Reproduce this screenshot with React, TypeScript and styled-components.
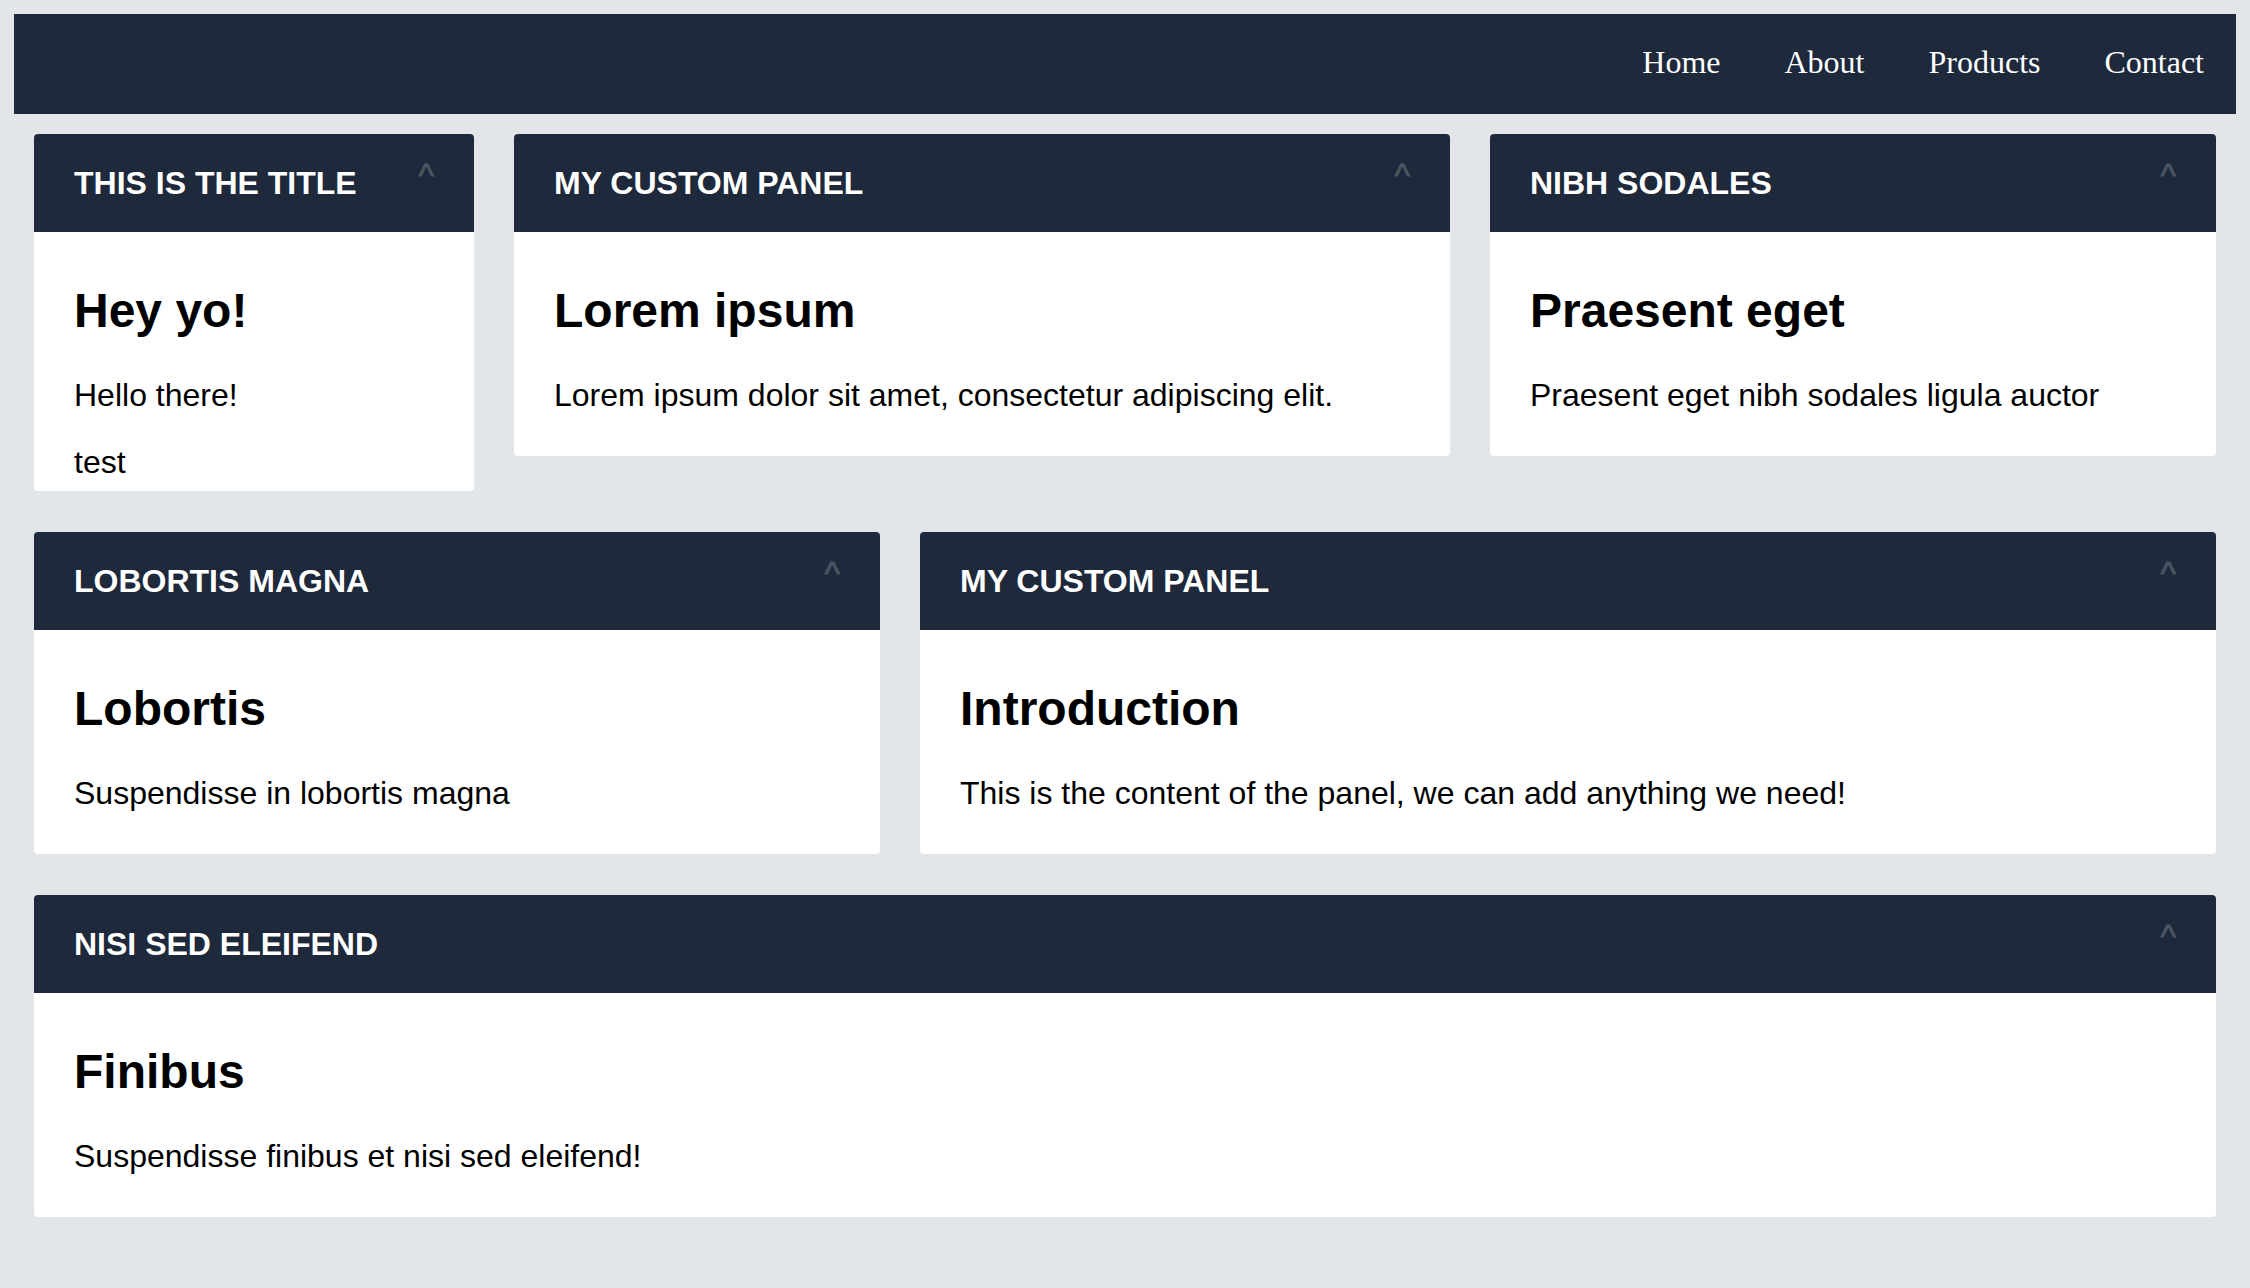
import React from "react";
import styled, { createGlobalStyle } from "styled-components";

const GlobalStyle = createGlobalStyle`
  html, body {
    margin: 0;
    padding: 0;
    background: #e2e6e9;
  }
  body {
    font-family: "Liberation Sans", Arial, sans-serif;
    color: #000;
  }
  * { box-sizing: border-box; }
`;

const Page = styled.div`
  padding: 14px;
  min-height: 1288px;
`;

const NavBar = styled.nav`
  height: 100px;
  background: #1e293b;
  display: flex;
  justify-content: flex-end;
  align-items: flex-start;
  padding-top: 30px;
`;

const NavLink = styled.a`
  font-family: "Liberation Serif", "Times New Roman", serif;
  font-size: 32px;
  line-height: 37px;
  color: #ffffff;
  text-decoration: none;
  padding: 0 32px;
  cursor: pointer;
`;

const Main = styled.main`
  padding: 20px;
  display: flex;
  flex-direction: column;
  gap: 41px;
`;

const Row = styled.div`
  display: flex;
  gap: 40px;
  align-items: flex-start;
`;

const Card = styled.section<{ $grow: number }>`
  flex: ${(p) => p.$grow} 1 0;
  min-width: 0;
  background: #ffffff;
  border-radius: 4px;
  overflow: hidden;
`;

const Header = styled.header`
  background: #1e293b;
  display: flex;
  justify-content: space-between;
  align-items: flex-start;
  padding: 30px 40px;
`;

const Title = styled.h3`
  margin: 0;
  font-size: 32px;
  line-height: 38px;
  font-weight: 700;
  color: #ffffff;
  text-transform: uppercase;
`;

const Toggle = styled.span`
  font-family: "Liberation Sans", Arial, sans-serif;
  font-size: 33px;
  line-height: 24px;
  color: #4b5563;
  -webkit-text-stroke: 0.8px #4b5563;
  cursor: pointer;
  user-select: none;
`;

const Body = styled.div<{ $maxHeight?: number }>`
  padding: 51px 40px 42px;
  ${(p) => (p.$maxHeight ? `max-height: ${p.$maxHeight}px; overflow: hidden;` : "")}
`;

const Heading = styled.h2`
  margin: 0 0 39px;
  font-size: 48px;
  line-height: 55px;
  font-weight: 700;
`;

const Text = styled.p`
  margin: 0;
  font-size: 32px;
  line-height: 37px;
  & + & {
    margin-top: 30px;
  }
`;

type PanelProps = {
  title: string;
  heading: string;
  lines: string[];
  grow: number;
  maxHeight?: number;
};

function Panel({ title, heading, lines, grow, maxHeight }: PanelProps) {
  return (
    <Card $grow={grow}>
      <Header>
        <Title>{title}</Title>
        <Toggle>^</Toggle>
      </Header>
      <Body $maxHeight={maxHeight}>
        <Heading>{heading}</Heading>
        {lines.map((l) => (
          <Text key={l}>{l}</Text>
        ))}
      </Body>
    </Card>
  );
}

export default function App() {
  return (
    <>
      <GlobalStyle />
      <Page>
        <NavBar>
          <NavLink>Home</NavLink>
          <NavLink>About</NavLink>
          <NavLink>Products</NavLink>
          <NavLink>Contact</NavLink>
        </NavBar>
        <Main>
          <Row>
            <Panel
              grow={440}
              title="This is the title"
              heading="Hey yo!"
              lines={["Hello there!", "test"]}
              maxHeight={259}
            />
            <Panel
              grow={936}
              title="My custom panel"
              heading="Lorem ipsum"
              lines={["Lorem ipsum dolor sit amet, consectetur adipiscing elit."]}
            />
            <Panel
              grow={726}
              title="Nibh sodales"
              heading="Praesent eget"
              lines={["Praesent eget nibh sodales ligula auctor"]}
            />
          </Row>
          <Row>
            <Panel
              grow={846}
              title="Lobortis magna"
              heading="Lobortis"
              lines={["Suspendisse in lobortis magna"]}
            />
            <Panel
              grow={1296}
              title="My custom panel"
              heading="Introduction"
              lines={["This is the content of the panel, we can add anything we need!"]}
            />
          </Row>
          <Row>
            <Panel
              grow={1}
              title="Nisi sed eleifend"
              heading="Finibus"
              lines={["Suspendisse finibus et nisi sed eleifend!"]}
            />
          </Row>
        </Main>
      </Page>
    </>
  );
}
